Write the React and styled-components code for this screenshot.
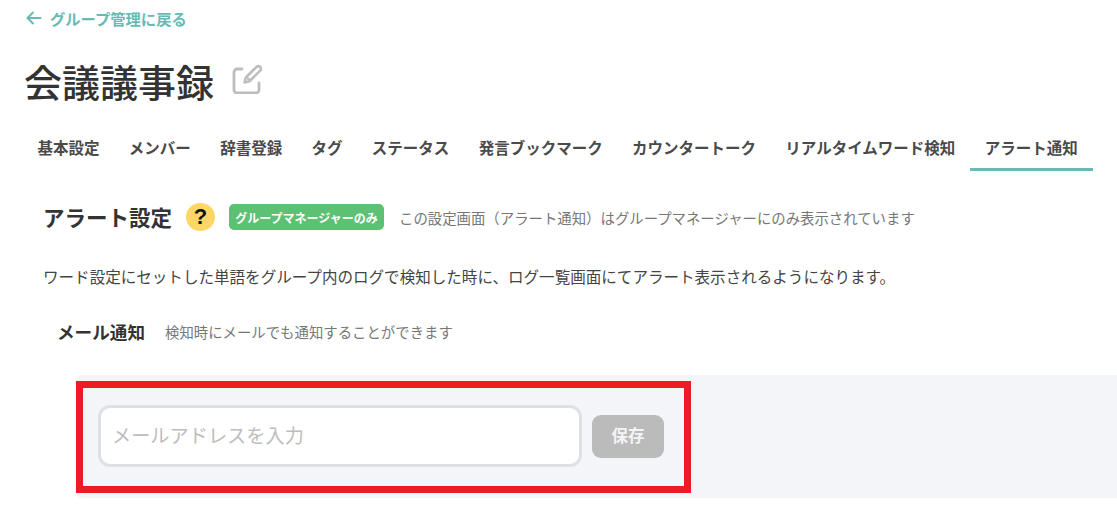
import React from "react";
import styled, { createGlobalStyle } from "styled-components";

const GlobalStyle = createGlobalStyle`
  html, body {
    margin: 0;
    padding: 0;
    background: #fff;
    overflow: hidden;
  }
  body {
    font-family: "Noto Sans CJK JP", "Noto Sans", sans-serif;
    color: #333;
  }
`;

const Page = styled.div`
  width: 1117px;
  height: 508px;
  overflow: hidden;
  box-sizing: border-box;
  padding-top: 9px;
`;

const BackLink = styled.a`
  display: flex;
  align-items: center;
  gap: 8px;
  height: 18px;
  margin-left: 26px;
  color: #68bbb5;
  font-size: 15.3px;
  font-weight: 700;
  line-height: 18px;
`;

const TitleRow = styled.div`
  display: flex;
  align-items: center;
  gap: 18px;
  height: 44px;
  margin: 32px 0 0 24px;
`;

const Title = styled.h1`
  margin: 0;
  font-size: 38px;
  font-weight: 500;
  line-height: 44px;
  color: #333;
`;

const EditSvg = styled.svg`
  margin-bottom: 5px;
`;

const Tabs = styled.nav`
  display: flex;
  margin: 28px 0 0 22.5px;
`;

const Tab = styled.div`
  box-sizing: border-box;
  height: 40px;
  padding: 0 15px;
  margin-right: -0.7px;
  font-size: 15.5px;
  font-weight: 700;
  line-height: 33px;
  color: #4a4a4a;
  white-space: nowrap;
  border-bottom: 3px solid ${(p) => (p.$active ? "#68bbb5" : "transparent")};
`;

const AlertHeader = styled.div`
  display: flex;
  align-items: center;
  height: 30px;
  margin: 31px 0 0 43px;
`;

const SectionTitle = styled.h2`
  margin: 0 14px 0 0;
  font-size: 21.5px;
  font-weight: 700;
  line-height: 30px;
  color: #333;
`;

const HelpBadge = styled.span`
  display: flex;
  align-items: center;
  justify-content: center;
  width: 29px;
  height: 28px;
  border-radius: 50%;
  background: #fdd766;
  color: #111;
  font-family: "Liberation Sans", sans-serif;
  font-size: 22px;
  font-weight: 700;
`;

const RoleTag = styled.span`
  display: flex;
  align-items: center;
  justify-content: center;
  box-sizing: border-box;
  width: 155px;
  height: 26px;
  margin-left: 14px;
  border-radius: 5px;
  background: #5cc173;
  color: #fff;
  font-size: 12px;
  font-weight: 700;
  white-space: nowrap;
`;

const Note = styled.span`
  margin-left: 15px;
  font-size: 14.4px;
  color: #777;
  white-space: nowrap;
`;

const Description = styled.p`
  margin: 34px 0 0 43px;
  font-size: 15.56px;
  line-height: 20px;
  color: #444;
  white-space: nowrap;
`;

const MailHeader = styled.div`
  display: flex;
  align-items: center;
  height: 26px;
  margin: 32px 0 0 57px;
`;

const MailTitle = styled.h3`
  margin: 0 20px 0 0;
  font-size: 17.6px;
  font-weight: 700;
  color: #333;
`;

const MailNote = styled.span`
  font-size: 14.4px;
  color: #777;
`;

const Panel = styled.div`
  position: relative;
  display: flex;
  align-items: center;
  gap: 10px;
  box-sizing: border-box;
  height: 123px;
  margin: 31px 0 0 76px;
  padding: 0 0 1px 22px;
  background: #f4f5f9;
  border-radius: 6px 0 0 6px;
`;

const EmailInput = styled.input`
  box-sizing: border-box;
  width: 484px;
  height: 62px;
  padding: 0 0 2px 11px;
  background: #fff;
  border: 3px solid #dfe0e6;
  border-radius: 12px;
  font-family: inherit;
  font-size: 19.2px;
  outline: none;

  &::placeholder {
    color: #bdbdbd;
    opacity: 1;
  }
`;

const SaveButton = styled.button`
  width: 72px;
  height: 43px;
  padding: 0 0 2px;
  border: none;
  border-radius: 9px;
  background: #bbb;
  color: #f4f4f4;
  font-family: inherit;
  font-size: 16.5px;
  font-weight: 700;
`;

// red annotation frame drawn over the screenshot
const Highlight = styled.div`
  position: absolute;
  left: 0;
  top: 6px;
  box-sizing: border-box;
  width: 615px;
  height: 112px;
  border: 7px solid #ed1c24;
  pointer-events: none;
`;

const tabs = [
  "基本設定",
  "メンバー",
  "辞書登録",
  "タグ",
  "ステータス",
  "発言ブックマーク",
  "カウンタートーク",
  "リアルタイムワード検知",
  "アラート通知",
];

function ArrowLeft() {
  return (
    <svg width="16" height="14" viewBox="0 0 16 14" fill="none" stroke="#68bbb5" strokeWidth="2" strokeLinecap="round" strokeLinejoin="round">
      <path d="M14.5 7H1.8" />
      <path d="M7 1.5 1.5 7 7 12.5" />
    </svg>
  );
}

function EditIcon() {
  return (
    <EditSvg width="30" height="30" viewBox="0 0 30 30" fill="none" stroke="#bdbdbd" strokeLinecap="round" strokeLinejoin="round">
      <path strokeWidth="2.8" d="M10 5H5a3 3 0 0 0-3 3v18a3 3 0 0 0 3 3h19a3 3 0 0 0 3-3v-7" />
      <path strokeWidth="2.6" d="M12.500 18.500l1.300-5L24.500 3a2.600 2.600 0 0 1 3.700 3.700L17.500 17.200z" />
      <path strokeWidth="2.4" d="M16 14.500l2 1.500" />
    </EditSvg>
  );
}

export default function App() {
  return (
    <Page>
      <GlobalStyle />
      <BackLink>
        <ArrowLeft />
        グループ管理に戻る
      </BackLink>
      <TitleRow>
        <Title>会議議事録</Title>
        <EditIcon />
      </TitleRow>
      <Tabs>
        {tabs.map((t) => (
          <Tab key={t} $active={t === "アラート通知"}>{t}</Tab>
        ))}
      </Tabs>
      <AlertHeader>
        <SectionTitle>アラート設定</SectionTitle>
        <HelpBadge>?</HelpBadge>
        <RoleTag>グループマネージャーのみ</RoleTag>
        <Note>この設定画面（アラート通知）はグループマネージャーにのみ表示されています</Note>
      </AlertHeader>
      <Description>
        ワード設定にセットした単語をグループ内のログで検知した時に、ログ一覧画面にてアラート表示されるようになります。
      </Description>
      <MailHeader>
        <MailTitle>メール通知</MailTitle>
        <MailNote>検知時にメールでも通知することができます</MailNote>
      </MailHeader>
      <Panel>
        <EmailInput placeholder="メールアドレスを入力" />
        <SaveButton>保存</SaveButton>
        <Highlight />
      </Panel>
    </Page>
  );
}
